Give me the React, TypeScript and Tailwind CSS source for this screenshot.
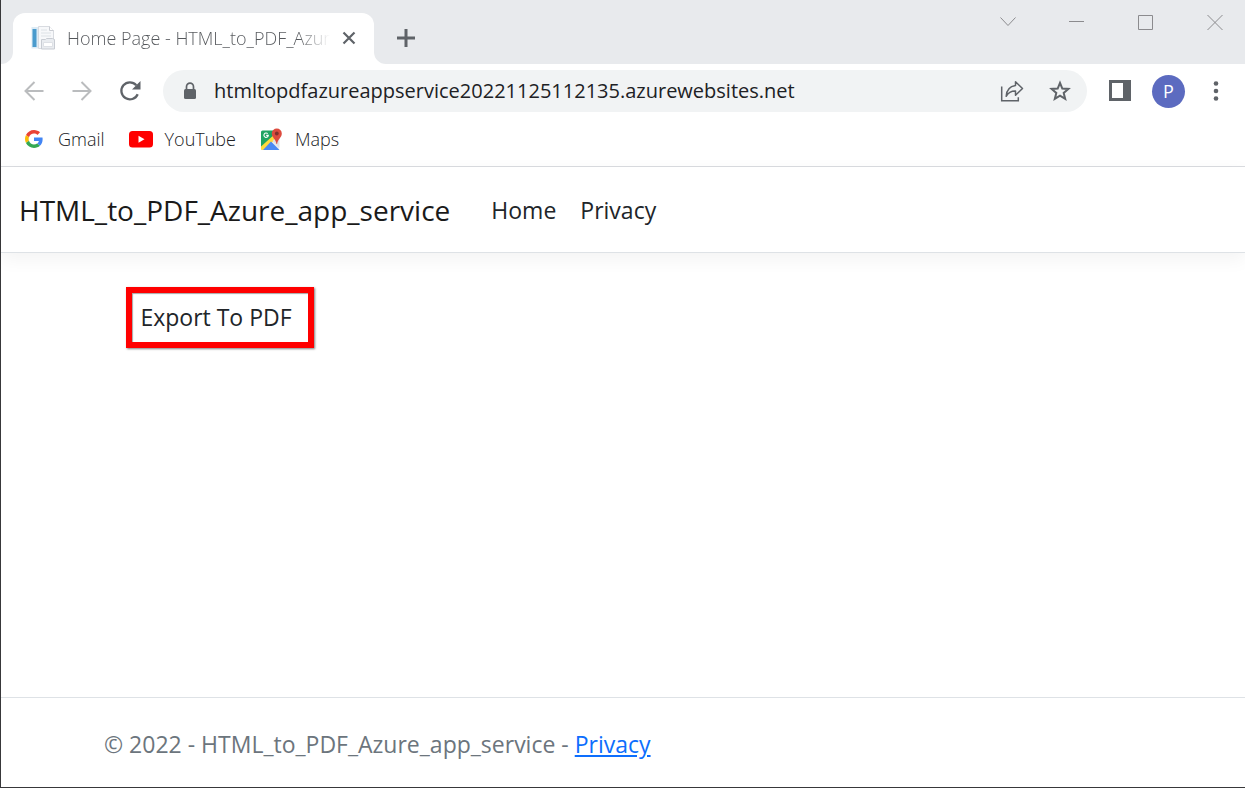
import React from "react";

function PageIcon() {
  return (
    <svg width="24" height="24" viewBox="0 0 24 24" aria-hidden="true">
      <path d="M7.500.5h11l4 4v18h-15z" fill="#f7f8fa" stroke="#d8dbe0" />
      <path d="M18.500.5v4h4" fill="#fff" stroke="#c9ccd2" />
      <path d="M10 4h6M10 7h10M10 10h10" stroke="#e6e9ed" strokeWidth="1.500" />
      <rect x=".5" y="1" width="6.500" height="21.500" fill="#dcebf5" />
      <rect x="1.500" y="3" width="4" height="18" fill="#4a9bcd" />
      <path d="M10.500 13.500h4l1-1h6l2 1v9.500h-13z" fill="#e9ecf0" stroke="#c8ccd3" />
      <path d="M12.500 16.500h9v4h-9z" fill="#fff" stroke="#dde0e5" />
    </svg>
  );
}

function GoogleIcon() {
  return (
    <svg width="18" height="18" viewBox="0 0 48 48" aria-hidden="true">
      <path fill="#EA4335" d="M24 9.500c3.540 0 6.710 1.220 9.210 3.600l6.850-6.850C35.900 2.380 30.470 0 24 0 14.620 0 6.510 5.380 2.560 13.220l7.980 6.190C12.430 13.720 17.740 9.500 24 9.500z" />
      <path fill="#4285F4" d="M46.980 24.550c0-1.570-.15-3.090-.38-4.550H24v9.020h12.940c-.58 2.960-2.260 5.480-4.780 7.180l7.730 6c4.510-4.180 7.090-10.360 7.090-17.650z" />
      <path fill="#FBBC05" d="M10.530 28.590A14.500 14.500 0 0 1 9.770 24c0-1.600.27-3.140.76-4.590l-7.980-6.190A23.900 23.900 0 0 0 0 24c0 3.880.92 7.540 2.560 10.780z" />
      <path fill="#34A853" d="M24 48c6.480 0 11.930-2.130 15.890-5.810l-7.730-6c-2.150 1.450-4.920 2.300-8.160 2.300-6.260 0-11.570-4.220-13.470-9.910l-7.980 6.190C6.510 42.620 14.620 48 24 48z" />
    </svg>
  );
}

function YouTubeIcon() {
  return (
    <svg width="24" height="18" viewBox="0 0 24 18" aria-hidden="true">
      <rect y="1" width="24" height="16.500" rx="3.500" fill="#f00" />
      <path d="M9.500 5.800v7l6-3.500z" fill="#fff" />
    </svg>
  );
}

function MapsIcon() {
  return (
    <svg width="23" height="23" viewBox="0 0 23 23" aria-hidden="true">
      <rect x="1" y="3" width="18" height="19" rx="1.500" fill="#ececec" />
      <path d="M2.500 2.500H16v7L2 21.500a1.500 1.500 0 0 1-1-1.500V4a1.500 1.500 0 0 1 1.500-1.500z" fill="#1ea362" />
      <path d="M1 18.500 15.500 5.500 17 10 3.500 22H2.500A1.500 1.500 0 0 1 1 20.500z" fill="#ffda3e" />
      <path d="m11 13.500 8.500 8.500h-16.500z" fill="#4a89f3" />
      <path d="m12.500 13 7 7v-9L15.500 10z" fill="#dfe1e5" />
      <path d="M7.700 5.600A2.200 2.200 0 1 0 8.300 7.400H6.200" fill="none" stroke="#fff" strokeWidth="1.100" />
      <path d="M16.800.5a5 5 0 0 0-5 5c0 4 4 5.500 4.700 10.500h.6c.7-5 4.700-6.500 4.700-10.500a5 5 0 0 0-5-5z" fill="#dd4b3e" />
      <circle cx="16.800" cy="5.500" r="1.900" fill="#822f2b" />
    </svg>
  );
}

function BrowserTab() {
  return (
    <div className="relative mt-[13px] ml-3 flex h-[51px] w-[361px] items-center justify-between rounded-t-xl bg-white pr-[13px] pb-px pl-[18px]">
      <svg className="absolute bottom-0 -left-3" width="12" height="12" aria-hidden="true">
        <path d="M12 0v12H0A12 12 0 0 0 12 0z" fill="#fff" />
      </svg>
      <svg className="absolute -right-3 bottom-0" width="12" height="12" aria-hidden="true">
        <path d="M0 0v12h12A12 12 0 0 1 0 0z" fill="#fff" />
      </svg>
      <div className="flex items-center gap-3">
        <PageIcon />
        <span className="bg-linear-to-r from-[#54575b] from-88% to-transparent bg-clip-text text-lg font-light whitespace-nowrap text-transparent">
          Home Page - HTML_to_PDF_Azur
        </span>
      </div>
      <button type="button" aria-label="Close tab" className="grid size-6 place-items-center text-[#5f6368]">
        <svg width="14" height="14" viewBox="0 0 14 14" fill="none" stroke="currentColor" strokeWidth="2.200">
          <path d="m1.500 1.500 11 11M12.500 1.500l-11 11" />
        </svg>
      </button>
    </div>
  );
}

function WindowControls() {
  const box = "grid h-11 w-[61px] place-items-center";
  return (
    <div className="flex h-11 items-center gap-2 text-[#8b8b8e]">
      <button type="button" aria-label="Search tabs" className={box}>
        <svg width="16" height="16" fill="none" stroke="currentColor"><path d="m.5 3.500 7.500 8 7.500-8" /></svg>
      </button>
      <button type="button" aria-label="Minimize" className={box}>
        <svg width="16" height="16" fill="none" stroke="currentColor"><path d="M0 7.500h15" /></svg>
      </button>
      <button type="button" aria-label="Maximize" className={box}>
        <svg width="16" height="16" fill="none" stroke="currentColor"><path d="M.5 1.500h14v14H.5z" /></svg>
      </button>
      <button type="button" aria-label="Close" className={box}>
        <svg width="16" height="16" fill="none" stroke="currentColor"><path d="m.5 1 15 15M15.500 1l-15 15" /></svg>
      </button>
    </div>
  );
}

function Toolbar() {
  return (
    <div className="flex items-center pt-[6px] pr-[17px] pl-[21px]">
      <div className="flex gap-6">
        <button type="button" aria-label="Back" className="grid size-6 place-items-center text-[#babcbe]">
          <svg width="22" height="22" viewBox="0 0 22 22" fill="none" stroke="currentColor" strokeWidth="2">
            <path d="M20.500 11H2.500M11.500 2l-9 9 9 9" />
          </svg>
        </button>
        <button type="button" aria-label="Forward" className="grid size-6 place-items-center text-[#babcbe]">
          <svg width="22" height="22" viewBox="0 0 22 22" fill="none" stroke="currentColor" strokeWidth="2">
            <path d="M1.500 11h18M10.500 2l9 9-9 9" />
          </svg>
        </button>
        <button type="button" aria-label="Reload" className="grid size-6 place-items-center text-[#5f6368]">
          <svg width="22" height="22" viewBox="0 0 22 22">
            <path d="M18.700 14.200A8.500 8.500 0 1 1 17.300 5.300" fill="none" stroke="currentColor" strokeWidth="2.300" />
            <path d="M21.500 1v8.500H13z" fill="currentColor" />
          </svg>
        </button>
      </div>
      <form className="ml-[21px] flex h-[42px] min-w-0 flex-1 items-center rounded-full bg-[#f1f3f4] pr-[15px] pl-5 text-[#5f6368]">
        <svg width="14" height="18" viewBox="0 0 14 18" aria-hidden="true">
          <rect x="1" y="7" width="12" height="10" rx="1.500" fill="currentColor" />
          <path d="M3.500 8V4.700a3.500 3.500 0 0 1 7 0V8" fill="none" stroke="currentColor" strokeWidth="1.700" />
        </svg>
        <input
          aria-label="Address"
          defaultValue="htmltopdfazureappservice20221125112135.azurewebsites.net"
          className="ml-[17px] min-w-0 flex-1 bg-transparent text-xl text-[#202124] outline-none"
        />
        <button type="button" aria-label="Share" className="grid size-6 place-items-center">
          <svg width="24" height="24" viewBox="0 0 24 24" fill="none" stroke="currentColor" strokeWidth="1.500">
            <path d="M1.700 7.500v14.200h16.600v-3.500" />
            <path d="M15.500 2.700 22.500 9.500l-7 6.800v-4.200c-4-.1-7 1-9.300 5.200.3-6 3.500-9.800 9.300-10.700z" strokeLinejoin="round" />
          </svg>
        </button>
        <button type="button" aria-label="Bookmark this page" className="ml-6 grid size-6 place-items-center">
          <svg width="24" height="24" viewBox="0 0 24 24" fill="none" stroke="currentColor" strokeWidth="2">
            <path d="m12 3.800 2.300 5.700 6.100.4-4.700 4 1.500 6-5.200-3.300-5.200 3.300 1.500-6-4.700-4 6.100-.4z" />
          </svg>
        </button>
      </form>
      <button type="button" aria-label="Side panel" className="ml-[21px] grid size-6 place-items-center text-[#5f6368]">
        <svg width="22" height="22" viewBox="0 0 22 22">
          <path fillRule="evenodd" d="M0 0h22v21H0zM3 3v15h11V3z" fill="currentColor" />
        </svg>
      </button>
      <button type="button" aria-label="Profile" className="ml-5 grid size-[33px] place-items-center rounded-full bg-[#5c6bc0] text-lg text-white">
        P
      </button>
      <button type="button" aria-label="Menu" className="ml-[19px] grid size-6 place-items-center text-[#5f6368]">
        <svg width="6" height="22" viewBox="0 0 6 22" fill="currentColor">
          <circle cx="3" cy="3.500" r="2.300" /><circle cx="3" cy="11" r="2.300" /><circle cx="3" cy="18.500" r="2.300" />
        </svg>
      </button>
    </div>
  );
}

function Bookmarks() {
  return (
    <nav aria-label="Bookmarks" className="flex h-[55px] items-center gap-6 border-b border-[#dadce0] pl-6 text-lg font-light text-[#202124]">
      <a href="#gmail" className="flex items-center gap-[15px]"><GoogleIcon />Gmail</a>
      <a href="#youtube" className="flex items-center gap-3"><YouTubeIcon />YouTube</a>
      <a href="#maps" className="flex items-center gap-3"><MapsIcon />Maps</a>
    </nav>
  );
}

export default function App() {
  return (
    <div className="flex min-h-screen flex-col border-b border-l border-[#38383a] bg-white font-['Open_Sans','Noto_Sans',sans-serif]">
      <div className="flex h-16 items-start justify-between bg-[#e8eaed]">
        <div className="flex items-center">
          <BrowserTab />
          <button type="button" aria-label="New tab" className="mt-3 ml-5 grid size-6 place-items-center text-[#5f6368]">
            <svg width="18" height="18" fill="none" stroke="currentColor" strokeWidth="3"><path d="M9 0v18M0 9h18" /></svg>
          </button>
        </div>
        <WindowControls />
      </div>
      <Toolbar />
      <Bookmarks />
      <header className="flex h-[86px] items-center border-b border-[#dee2e6] pt-px pl-[18px] text-[#212529] shadow-[0_6px_18px_rgba(0,0,0,0.05)]">
        <a href="#top" className="text-[28px] text-[#1a1a1a]">HTML_to_PDF_Azure_app_service</a>
        <nav aria-label="Main" className="ml-[41px] flex gap-6 text-[23px]">
          <a href="#home">Home</a>
          <a href="#privacy">Privacy</a>
        </nav>
      </header>
      <main className="flex-1 pt-[34px] pl-[125px]">
        <button type="button" className="h-[61px] w-[188px] border-6 border-[#f00] pr-2 text-[23px] text-[#212529] shadow-[1px_1px_2px_rgba(0,0,0,0.5),inset_1px_1px_1px_rgba(0,0,0,0.35)]">
          Export To PDF
        </button>
      </main>
      <footer className="flex h-[90px] items-center border-t border-[#dee2e6] pt-1 pl-[103px] text-[23px] text-[#6c757d]">
        <p>
          © 2022 - HTML_to_PDF_Azure_app_service -{" "}
          <a href="#privacy" className="text-[#0d6efd] underline">Privacy</a>
        </p>
      </footer>
    </div>
  );
}
